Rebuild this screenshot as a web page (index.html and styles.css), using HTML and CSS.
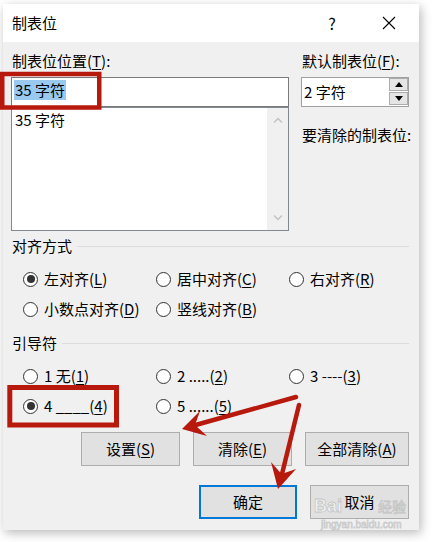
FILE: index.html
```
<!DOCTYPE html>
<html lang="zh-CN">
<head>
<meta charset="utf-8">
<title>制表位</title>
<link rel="stylesheet" href="styles.css">
</head>
<body>
<div class="dialog">
  <div class="titlebar">
    <span class="title">制表位</span>
    <span class="help">?</span>
    <svg class="close" width="14" height="14" viewBox="0 0 14 14"><path d="M1 1L13 13M13 1L1 13" stroke="#000" stroke-width="1.1" fill="none"/></svg>
  </div>
  <div class="content">
    <div class="top">
      <div class="left">
        <div class="label">制表位位置(<u>T</u>):</div>
        <div class="input"><span class="sel">35 字符</span></div>
        <div class="list">
          <div class="items"><div class="item">35 字符</div></div>
          <div class="scroll">
            <svg width="10" height="6" viewBox="0 0 10 6"><path d="M1 5.5L5 1.5L9 5.5" stroke="#c2c2c2" stroke-width="1.4" fill="none"/></svg>
            <svg width="10" height="6" viewBox="0 0 10 6"><path d="M1 0.5L5 4.5L9 0.5" stroke="#c2c2c2" stroke-width="1.4" fill="none"/></svg>
          </div>
        </div>
      </div>
      <div class="right">
        <div class="label">默认制表位(<u>F</u>):</div>
        <div class="spin">
          <span class="spintext">2 字符</span>
          <div class="spinbtns">
            <div class="sb"><svg width="8" height="5" viewBox="0 0 8 5"><path d="M0 5L4 0L8 5Z" fill="#000"/></svg></div>
            <div class="sb"><svg width="8" height="5" viewBox="0 0 8 5"><path d="M0 0L4 5L8 0Z" fill="#000"/></svg></div>
          </div>
        </div>
        <div class="label clear">要清除的制表位:</div>
      </div>
    </div>

    <div class="legend first"><span>对齐方式</span><span class="rule"></span></div>
    <div class="radios">
      <div class="radio"><span class="dot on"></span><span>左对齐(<u>L</u>)</span></div>
      <div class="radio"><span class="dot"></span><span>居中对齐(<u>C</u>)</span></div>
      <div class="radio"><span class="dot"></span><span>右对齐(<u>R</u>)</span></div>
      <div class="radio"><span class="dot"></span><span>小数点对齐(<u>D</u>)</span></div>
      <div class="radio"><span class="dot"></span><span>竖线对齐(<u>B</u>)</span></div>
    </div>

    <div class="legend second"><span>引导符</span><span class="rule"></span></div>
    <div class="radios">
      <div class="radio"><span class="dot"></span><span>1 无(<u>1</u>)</span></div>
      <div class="radio"><span class="dot"></span><span>2 .....(<u>2</u>)</span></div>
      <div class="radio"><span class="dot"></span><span>3 ----(<u>3</u>)</span></div>
      <div class="radio"><span class="dot on"></span><span>4 ____(<u>4</u>)</span></div>
      <div class="radio"><span class="dot"></span><span>5 ......(<u>5</u>)</span></div>
    </div>

    <div class="btnrow">
      <div class="btn w99">设置(<u>S</u>)</div>
      <div class="btn w99">清除(<u>E</u>)</div>
      <div class="btn w104">全部清除(<u>A</u>)</div>
    </div>
    <div class="btnrow bottom">
      <div class="btn w98 default">确定</div>
      <div class="btn w99">取消</div>
    </div>
  </div>
</div>

<svg class="overlay" width="436" height="542" viewBox="0 0 436 542">
  <g class="wm">
    <text x="314" y="512" class="wm-big">Bai</text>
    <text x="378" y="512" class="wm-mid">经验</text>
    <text x="321" y="528" class="wm-small">jingyan.baidu.com</text>
  </g>
  <g fill="none" stroke="#b8190d">
    <rect x="2.25" y="74" width="97" height="33.5" stroke-width="4.5"/>
    <rect x="9.8" y="387.5" width="106.7" height="37.5" stroke-width="5"/>
    <line x1="296" y1="397" x2="192" y2="426" stroke-width="4.5" stroke-linecap="round"/>
    <line x1="299" y1="405" x2="281" y2="478" stroke-width="4.5" stroke-linecap="round"/>
  </g>
  <g fill="#b8190d">
    <polygon points="182,429 200,411 195,425 207,436"/>
    <polygon points="278,489 271,462 281.5,474 296,469"/>
  </g>
</svg>
</body>
</html>
```
FILE: styles.css
```
* { box-sizing: border-box; }

body {
  margin: 0;
  width: 436px;
  height: 542px;
  position: relative;
  overflow: hidden;
  background: #fff;
  font-family: "Noto Sans CJK SC", "Noto Sans", sans-serif;
  font-size: 15px;
  color: #000;
}

u { text-decoration: underline; text-underline-offset: 2px; text-decoration-thickness: 1px; }

.dialog {
  margin: 4px 0 0 3px;
  width: 416px;
  height: 526px;
  background: #f0f0f0;
  box-shadow: 2px 3px 10px rgba(0, 0, 0, 0.28);
  display: flex;
  flex-direction: column;
}

.titlebar {
  height: 38px;
  background: #fff;
  display: flex;
  align-items: center;
  padding: 0 23px 0 9px;
  flex-shrink: 0;
}
.title { flex: 1; line-height: 20px; }
.help { width: 16px; text-align: center; line-height: 20px; font-size: 16px; }
.close { margin-left: 42px; }

.content { padding: 9px 10px 0 8px; }

.top { display: flex; gap: 12px; }
.left { width: 278px; }
.right { width: 108px; }

.label { line-height: 20px; height: 20px; white-space: nowrap; padding-left: 1px; }
.clear { margin-top: 18px; }

.input {
  margin-top: 6px;
  height: 30px;
  border: 1px solid #7a7a7a;
  background: #fff;
  padding: 1px 0 0 2px;
}
.sel {
  display: inline-block;
  background: #99c9ef;
  line-height: 20px;
  padding: 0 1px;
}

.list {
  height: 124px;
  border: 1px solid #828790;
  background: #fff;
  display: flex;
}
.items { flex: 1; padding: 2px 3px; }
.item { line-height: 20px; }
.scroll {
  width: 21px;
  background: #f0f0f0;
  display: flex;
  flex-direction: column;
  justify-content: space-between;
  align-items: center;
  padding: 9px 0 9px;
}

.spin {
  margin-top: 6px;
  height: 30px;
  border: 1px solid #a0a0a0;
  background: #fff;
  display: flex;
  align-items: stretch;
  padding-left: 2px;
}
.spintext { line-height: 28px; }
.spinbtns {
  margin-left: auto;
  width: 19px;
  display: flex;
  flex-direction: column;
  gap: 1px;
  padding-bottom: 1px;
}
.sb {
  flex: 1;
  background: #e5e5e5;
  border: 1px solid #acacac;
  display: flex;
  align-items: center;
  justify-content: center;
}

.legend {
  display: flex;
  align-items: center;
  gap: 5px;
  line-height: 20px;
  height: 20px;
  padding-left: 1px;
}
.legend.first { margin-top: 5px; }
.legend.second { margin-top: 9px; }
.rule { flex: 1; height: 1px; background: #dcdcdc; }

.radios {
  margin-top: 8px;
  padding-left: 12px;
  display: grid;
  grid-template-columns: 133px 133px 1fr;
  grid-auto-rows: 30px;
}
.radio {
  display: flex;
  align-items: center;
  gap: 6px;
  white-space: nowrap;
  line-height: 20px;
}
.dot {
  width: 15px;
  height: 15px;
  border: 1px solid #333;
  border-radius: 50%;
  background: #fff;
  display: flex;
  align-items: center;
  justify-content: center;
  flex-shrink: 0;
}
.dot.on::after {
  content: "";
  width: 8px;
  height: 8px;
  border-radius: 50%;
  background: #333;
}

.btnrow {
  margin-top: 11px;
  display: flex;
  justify-content: flex-end;
  gap: 13px;
}
.btnrow.bottom { margin-top: 19px; }
.btn {
  height: 34px;
  border: 1px solid #adadad;
  background: #e1e1e1;
  display: flex;
  align-items: center;
  justify-content: center;
  line-height: 20px;
  white-space: nowrap;
}
.btn.default { border: 2px solid #0078d7; }
.w98 { width: 98px; }
.w99 { width: 99px; }
.w104 { width: 104px; }

.overlay {
  position: absolute;
  left: 0;
  top: 0;
  pointer-events: none;
}
.wm text {
  fill: rgba(255, 255, 255, 0.55);
  stroke: rgba(150, 150, 150, 0.45);
  stroke-width: 0.8;
  font-family: "Liberation Sans", "Noto Sans CJK SC", sans-serif;
}
.wm-big { font-size: 18px; font-weight: bold; }
.wm-mid { font-size: 14px; }
.wm-small { font-size: 10px; stroke-width: 0.4; }
```
